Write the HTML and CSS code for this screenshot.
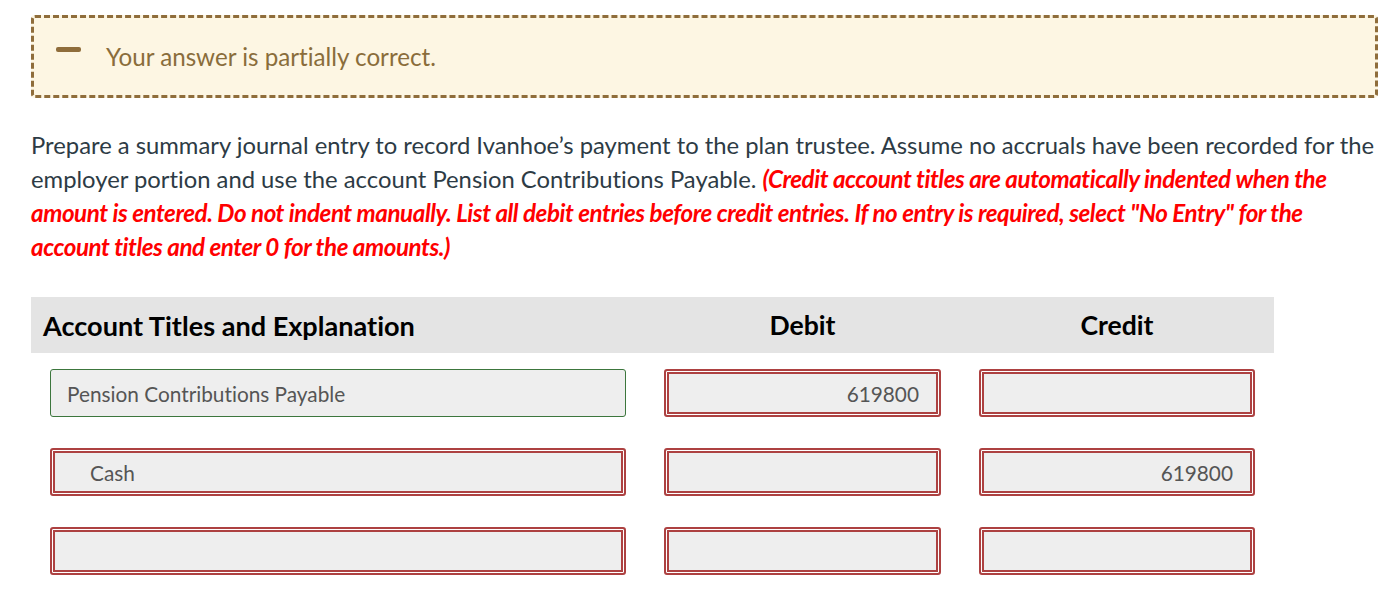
FILE: index.html
```html
<!DOCTYPE html>
<html>
<head>
<meta charset="utf-8">
<link rel="stylesheet" href="styles.css">
</head>
<body>
<div class="page">
  <div class="banner">
    <span class="minus"></span>
    <span class="banner-text">Your answer is partially correct.</span>
  </div>
  <p class="question">Prepare a summary journal entry to record Ivanhoe’s payment to the plan trustee. Assume no accruals have been recorded for the employer portion and use the account Pension Contributions Payable. <em class="note">(Credit account titles are automatically indented when the amount is entered. Do not indent manually. List all debit entries before credit entries. If no entry is required, select "No Entry" for the account titles and enter 0 for the amounts.)</em></p>
  <div class="journal">
    <div class="head head-left">Account Titles and Explanation</div>
    <div class="head head-center">Debit</div>
    <div class="head head-center">Credit</div>

    <div class="cell"><div class="field ok">Pension Contributions Payable</div></div>
    <div class="cell"><div class="field bad num">619800</div></div>
    <div class="cell"><div class="field bad num"></div></div>

    <div class="cell"><div class="field bad indent">Cash</div></div>
    <div class="cell"><div class="field bad num"></div></div>
    <div class="cell"><div class="field bad num">619800</div></div>

    <div class="cell"><div class="field bad"></div></div>
    <div class="cell"><div class="field bad num"></div></div>
    <div class="cell"><div class="field bad num"></div></div>
  </div>
</div>
</body>
</html>
```

FILE: styles.css
```css
html, body {
  margin: 0;
  padding: 0;
  background: #fff;
}
body {
  font-family: Lato, "Open Sans", sans-serif;
  font-variant-ligatures: no-common-ligatures;
}
.page {
  padding: 15px 11px 0 31px;
}
.banner {
  box-sizing: border-box;
  height: 83px;
  width: 1347px;
  background: #fdf6e3;
  border: 3px dashed #8f6d3b;
  border-radius: 4px;
  display: flex;
  align-items: center;
  padding-left: 22px;
}
.minus {
  display: block;
  width: 25px;
  height: 5px;
  border-radius: 2px;
  background: #8f6d3b;
  margin-top: -14px;
}
.banner-text {
  margin-left: 25px;
  font-size: 24.2px;
  color: #8a6d3b;
  margin-top: -1px;
}
.question {
  margin: 31px 0 0 0;
  font-size: 23.8px;
  line-height: 33px;
  color: #2d3b45;
  width: 1345px;
}
.note {
  color: #ff0000;
  font-weight: 700;
  font-style: italic;
  font-size: 24.2px;
  letter-spacing: -0.45px;
}
.journal {
  margin-top: 33px;
  display: grid;
  grid-template-columns: 614px 315px 314px;
  row-gap: 31px;
}
.head {
  background: #e4e4e4;
  height: 56px;
  display: flex;
  align-items: center;
  font-size: 26.6px;
  font-weight: 700;
  color: #000;
  margin-bottom: -15px;
}
.head-left {
  padding-left: 12px;
  font-size: 27.1px;
}
.head-center {
  justify-content: center;
}
.cell {
  padding: 0 19px 0 19px;
}
.field {
  box-sizing: border-box;
  height: 48px;
  background: #eeeeee;
  border-radius: 3px;
  font-size: 20.8px;
  color: #555;
  display: flex;
  align-items: center;
  padding: 0 16px;
}
.ok {
  border: 1px solid #3c763d;
}
.bad {
  border: 2px solid #ad4141;
  box-shadow: inset 0 0 0 1px #fff, inset 0 0 0 3px #ad4141;
}
.num {
  justify-content: flex-end;
  padding-right: 20px;
}
.indent {
  padding-left: 38px;
}
```
